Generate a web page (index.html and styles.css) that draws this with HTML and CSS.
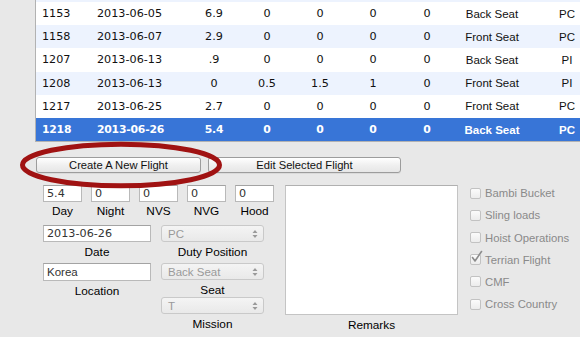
FILE: index.html
```html
<!DOCTYPE html>
<html>
<head>
<meta charset="utf-8">
<link rel="stylesheet" href="styles.css">
</head>
<body>
<div class="app">
  <div class="grid-wrap">
    <div class="row alt partial"></div>
    <div class="row">
      <div class="c id num">1153</div><div class="c date num">2013-06-05</div><div class="c num">6.9</div><div class="c num">0</div><div class="c num">0</div><div class="c num">0</div><div class="c num">0</div><div class="c txt">Back Seat</div><div class="c txt">PC</div>
    </div>
    <div class="row alt">
      <div class="c id num">1158</div><div class="c date num">2013-06-07</div><div class="c num">2.9</div><div class="c num">0</div><div class="c num">0</div><div class="c num">0</div><div class="c num">0</div><div class="c txt">Front Seat</div><div class="c txt">PC</div>
    </div>
    <div class="row">
      <div class="c id num">1207</div><div class="c date num">2013-06-13</div><div class="c num">.9</div><div class="c num">0</div><div class="c num">0</div><div class="c num">0</div><div class="c num">0</div><div class="c txt">Back Seat</div><div class="c txt">PI</div>
    </div>
    <div class="row alt">
      <div class="c id num">1208</div><div class="c date num">2013-06-13</div><div class="c num">0</div><div class="c num">0.5</div><div class="c num">1.5</div><div class="c num">1</div><div class="c num">0</div><div class="c txt">Front Seat</div><div class="c txt">PI</div>
    </div>
    <div class="row">
      <div class="c id num">1217</div><div class="c date num">2013-06-25</div><div class="c num">2.7</div><div class="c num">0</div><div class="c num">0</div><div class="c num">0</div><div class="c num">0</div><div class="c txt">Front Seat</div><div class="c txt">PC</div>
    </div>
    <div class="row selected">
      <div class="c id num">1218</div><div class="c date num">2013-06-26</div><div class="c num">5.4</div><div class="c num">0</div><div class="c num">0</div><div class="c num">0</div><div class="c num">0</div><div class="c txt">Back Seat</div><div class="c txt">PC</div>
    </div>
  </div>

  <div class="buttons">
    <div class="btn create">Create A New Flight</div>
    <div class="btn edit">Edit Selected Flight</div>
  </div>

  <div class="form">
    <div class="left">
      <div class="times">
        <div class="tfield"><div class="input num">5.4</div><div class="lbl">Day</div></div>
        <div class="tfield"><div class="input num">0</div><div class="lbl">Night</div></div>
        <div class="tfield"><div class="input num">0</div><div class="lbl">NVS</div></div>
        <div class="tfield"><div class="input num">0</div><div class="lbl">NVG</div></div>
        <div class="tfield"><div class="input num">0</div><div class="lbl">Hood</div></div>
      </div>
      <div class="lower">
        <div class="field"><div class="input num">2013-06-26</div><div class="lbl">Date</div></div>
        <div class="field"><div class="popup"><span>PC</span><svg class="arrows" width="6" height="10" viewBox="0 0 6 10"><path d="M0.5 4 L3 1 L5.5 4 Z M0.5 6 L3 9 L5.5 6 Z" fill="#9a9a9a"/></svg></div><div class="lbl">Duty Position</div></div>
        <div class="field"><div class="input loc">Korea</div><div class="lbl">Location</div></div>
        <div class="field"><div class="popup"><span>Back Seat</span><svg class="arrows" width="6" height="10" viewBox="0 0 6 10"><path d="M0.5 4 L3 1 L5.5 4 Z M0.5 6 L3 9 L5.5 6 Z" fill="#9a9a9a"/></svg></div><div class="lbl">Seat</div></div>
        <div class="field"></div>
        <div class="field"><div class="popup"><span>T</span><svg class="arrows" width="6" height="10" viewBox="0 0 6 10"><path d="M0.5 4 L3 1 L5.5 4 Z M0.5 6 L3 9 L5.5 6 Z" fill="#9a9a9a"/></svg></div><div class="lbl">Mission</div></div>
      </div>
    </div>
    <div class="remarks-col">
      <div class="remarks"></div>
      <div class="lbl">Remarks</div>
    </div>
    <div class="checks">
      <div class="check"><span class="box"></span>Bambi Bucket</div>
      <div class="check"><span class="box"></span>Sling loads</div>
      <div class="check"><span class="box"></span>Hoist Operations</div>
      <div class="check"><span class="box checked"><svg class="tick" width="14" height="14" viewBox="0 0 14 14"><path d="M2.5 7.5 L5 11 L11.5 1.5" fill="none" stroke="#8c8c8c" stroke-width="1.6" stroke-linecap="round" stroke-linejoin="round"/></svg></span>Terrian Flight</div>
      <div class="check"><span class="box"></span>CMF</div>
      <div class="check"><span class="box"></span>Cross Country</div>
    </div>
  </div>

  <svg class="ellipse" width="580" height="337" viewBox="0 0 580 337">
    <ellipse cx="121" cy="165" rx="98.5" ry="20.8" fill="none" stroke="#a01212" stroke-width="5"/>
  </svg>
</div>
</body>
</html>
```

FILE: styles.css
```css
html, body {
  margin: 0;
  padding: 0;
}
body {
  background: #e8e8e8;
  width: 580px;
  height: 337px;
  overflow: hidden;
  font-family: "Liberation Sans", Arial, sans-serif;
  font-size: 11px;
  color: #111;
}
.app {
  position: relative;
  width: 580px;
  height: 337px;
}
.num {
  font-family: "DejaVu Sans", sans-serif;
  font-size: 11.2px;
}
.grid-wrap {
  margin-left: 35px;
  border-left: 1px solid #b2b2b2;
  border-bottom: 1px solid #b2b2b2;
  overflow: hidden;
  background: #fff;
}
.row {
  display: grid;
  grid-template-columns: 54px 97px 54px 52px 54px 52px 56px 74px 76px;
  height: 23.2px;
  align-items: center;
  background: #fff;
}
.row.alt {
  background: #edf3fe;
}
.row.partial {
  height: 2px;
}
.row.selected {
  background: #3875d7;
  color: #fff;
  font-weight: bold;
}
.row.selected .num {
  font-size: 10.8px;
  letter-spacing: -0.2px;
}
.c {
  text-align: center;
  white-space: nowrap;
}
.c.id {
  text-align: left;
  padding-left: 6px;
}
.c.date {
  text-align: left;
  padding-left: 7px;
}
.c.txt {
  font-size: 11.5px;
  color: inherit;
}
.buttons {
  display: flex;
  gap: 7px;
  margin-top: 15px;
  margin-left: 36px;
}
.btn {
  height: 14px;
  line-height: 14px;
  border: 1px solid #9c9c9c;
  border-radius: 3px;
  background: linear-gradient(#ffffff, #f0f0f0 50%, #e6e6e6);
  text-align: center;
  font-size: 11.2px;
  color: #111;
  box-shadow: 0 1px 0 rgba(0,0,0,0.06);
}
.btn.create {
  width: 163px;
}
.btn.edit {
  width: 191px;
}
.form {
  display: flex;
  margin-top: 12px;
}
.left {
  margin-left: 43px;
  width: 231px;
}
.times {
  display: flex;
  gap: 9px;
}
.tfield {
  width: 39px;
}
.input {
  box-sizing: border-box;
  height: 17px;
  line-height: 15px;
  background: #fff;
  border: 1px solid #b9b9b9;
  border-top-color: #a3a3a3;
  padding-left: 3px;
  color: #333;
  white-space: nowrap;
  overflow: hidden;
}
.input.loc {
  height: 18px;
  line-height: 16px;
  font-size: 11.5px;
}
.lbl {
  text-align: center;
  font-size: 11.8px;
  line-height: 14px;
  margin-top: 2px;
  color: #000;
  white-space: nowrap;
}
.lower {
  display: grid;
  grid-template-columns: 108px 103px;
  grid-template-rows: 38px 34px auto;
  column-gap: 10px;
  margin-top: 7px;
}
.lower .lbl {
  margin-top: 3px;
}
.popup {
  box-sizing: border-box;
  height: 17px;
  border: 1px solid #c9c9c9;
  border-radius: 3px;
  background: linear-gradient(#f4f4f4, #e9e9e9);
  display: flex;
  align-items: center;
  justify-content: space-between;
  padding: 0 5px 0 6px;
  color: #9a9a9a;
  font-size: 11.5px;
}
.arrows {
  display: block;
}
.remarks-col {
  margin-left: 11px;
  width: 173px;
}
.remarks {
  box-sizing: border-box;
  height: 130px;
  background: #fff;
  border: 1px solid #c4c4c4;
  border-top-color: #b0b0b0;
}
.remarks-col .lbl {
  margin-top: 3px;
}
.checks {
  margin-left: 12px;
  margin-top: -3px;
  display: flex;
  flex-direction: column;
}
.check {
  height: 22.2px;
  display: flex;
  align-items: center;
  color: #8a8a8a;
  font-size: 11.3px;
  white-space: nowrap;
}
.box {
  position: relative;
  box-sizing: border-box;
  width: 11px;
  height: 11px;
  border: 1px solid #c2c2c2;
  border-radius: 2px;
  background: linear-gradient(#fbfbfb, #ececec);
  margin-right: 4px;
}
.tick {
  position: absolute;
  left: -1px;
  top: -5px;
}
.ellipse {
  position: absolute;
  left: 0;
  top: 0;
  pointer-events: none;
}
```
